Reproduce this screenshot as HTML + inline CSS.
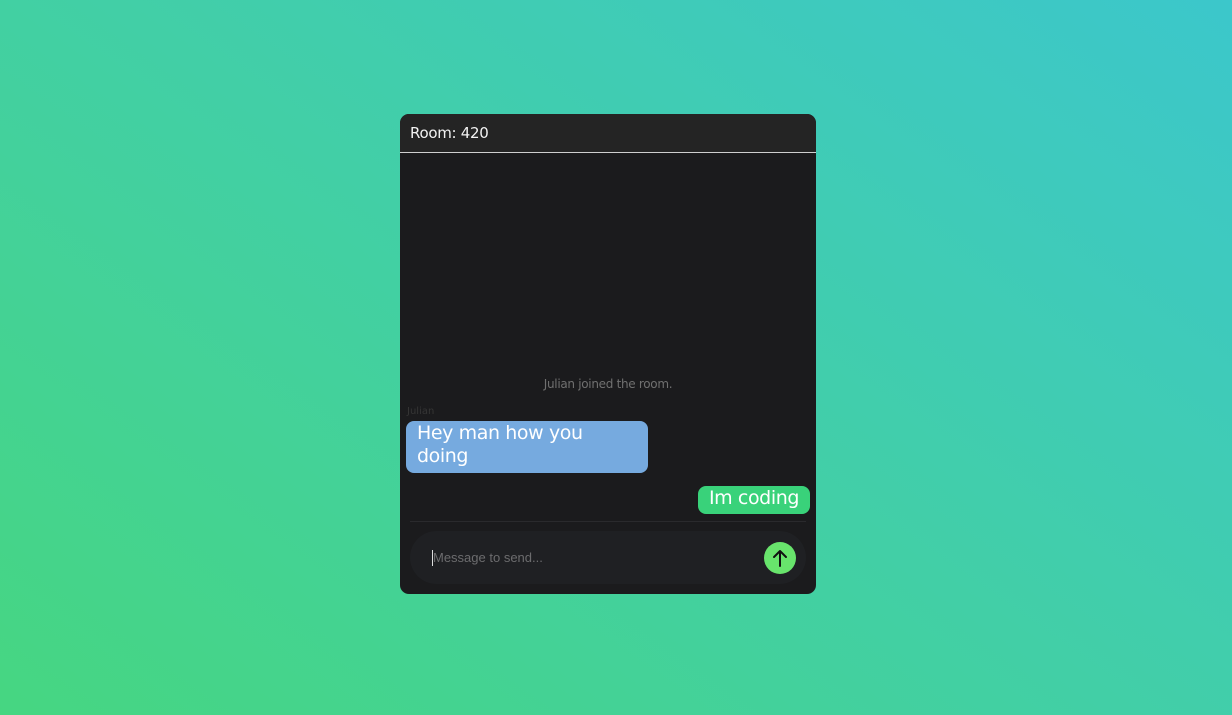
<!DOCTYPE html>
<html><head><style>
*{margin:0;padding:0;box-sizing:border-box}
body{width:1232px;height:715px;overflow:hidden;background:linear-gradient(35deg,#46d681 0%,#42cfa6 50%,#3cc7cb 100%);font-family:"DejaVu Sans","Liberation Sans",sans-serif;position:relative}
.card{position:absolute;left:400px;top:114px;width:416px;height:480px;background:#1b1b1d;border-radius:9px;overflow:hidden}
.hdr{height:39px;background:#242424;border-bottom:1px solid #cfcfcf;color:#f2f2f2;font-size:15px;padding:10px 10px;letter-spacing:-0.3px}
.abs{position:absolute}
</style></head><body>
<div class="card">
<div class="hdr">Room: 420</div>
<div class="abs" style="left:0;width:416px;top:263px;text-align:center;color:#707070;font-size:12px;letter-spacing:-0.3px">Julian joined the room.</div>
<div class="abs" style="left:7px;top:292px;color:#353535;font-size:10px">Julian</div>
<div class="abs" style="left:6px;top:307px;width:242px;height:52px;background:#76aadf;border-radius:8px;color:#fff;font-size:19px;line-height:23px;padding:1px 11px;letter-spacing:-0.4px">Hey man how you doing</div>
<div class="abs" style="left:298px;top:372px;width:112px;height:28px;background:#39d27a;border-radius:8px;color:#fff;font-size:19px;line-height:25px;text-align:center;letter-spacing:-0.4px">Im coding</div>
<div class="abs" style="left:10px;top:407px;width:396px;height:1px;background:#2a2a2d"></div>
<div class="abs" style="left:10px;top:417px;width:396px;height:53px;background:#1f2023;border-radius:27px"></div>
<div class="abs" style="left:32px;top:436px;width:1px;height:16px;background:#ddd"></div>
<div class="abs" style="left:33px;top:436px;color:#6c6c6e;font-family:'Liberation Sans',sans-serif;font-size:13px">Message to send...</div>
<div class="abs" style="left:364px;top:428px;width:32px;height:32px;border-radius:50%;background:#68e46c">
<svg width="32" height="32" viewBox="0 0 32 32"><path d="M16 24V9M10 15l6-6 6 6" stroke="#111" stroke-width="2" fill="none" stroke-linecap="round" stroke-linejoin="round"/></svg>
</div>
</div>
</body></html>
